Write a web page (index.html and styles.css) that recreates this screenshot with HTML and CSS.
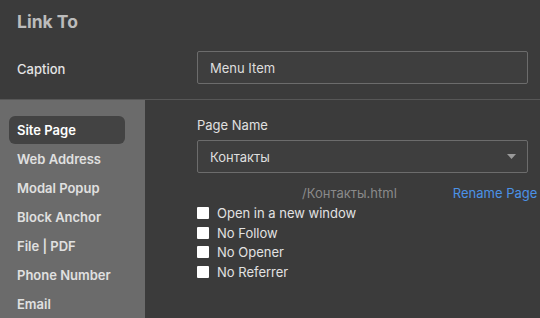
FILE: index.html
```html
<!DOCTYPE html>
<html>
<head>
<meta charset="utf-8">
<link rel="stylesheet" href="styles.css">
</head>
<body>
<div class="dialog">
  <div class="header">Link To</div>
  <div class="caption-row">
    <div class="caption-label">Caption</div>
    <div class="field">Menu Item</div>
  </div>
  <div class="main">
    <nav class="sidebar">
      <div class="nav-item active">Site Page</div>
      <div class="nav-item">Web Address</div>
      <div class="nav-item">Modal Popup</div>
      <div class="nav-item">Block Anchor</div>
      <div class="nav-item">File | PDF</div>
      <div class="nav-item">Phone Number</div>
      <div class="nav-item">Email</div>
    </nav>
    <section class="content">
      <div class="label">Page Name</div>
      <div class="field select">
        <span>Контакты</span>
        <svg class="arrow" width="9" height="5" viewBox="0 0 9 5"><path d="M0 0 H9 L4.5 5 Z" fill="#9a9a9a"/></svg>
      </div>
      <div class="path-row">
        <span class="path">/Контакты.html</span>
        <span class="rename">Rename Page</span>
      </div>
      <div class="checks">
        <div class="check"><span class="box"></span>Open in a new window</div>
        <div class="check"><span class="box"></span>No Follow</div>
        <div class="check"><span class="box"></span>No Opener</div>
        <div class="check"><span class="box"></span>No Referrer</div>
      </div>
    </section>
  </div>
</div>
</body>
</html>
```
FILE: styles.css
```css
html, body {
  margin: 0;
  padding: 0;
  background: #3b3b3b;
}
body {
  width: 540px;
  height: 318px;
  overflow: hidden;
  font-family: Inter, "Noto Sans", sans-serif;
  font-size: 13px;
  color: #e2e2e2;
}
.dialog {
  display: flex;
  flex-direction: column;
  height: 318px;
}
.header {
  height: 42px;
  display: flex;
  align-items: center;
  padding-left: 17px;
  font-size: 17.5px;
  font-weight: 700;
  color: #bcbcbc;
  padding-top: 1px;
  box-sizing: border-box;
}
.caption-row {
  display: flex;
  align-items: center;
  margin-top: 9px;
  padding-bottom: 15px;
  border-bottom: 1px solid #575757;
}
.caption-label {
  width: 180px;
  padding-left: 17px;
  font-weight: 500;
  color: #e4e4e4;
  padding-top: 3px;
}
.field {
  box-sizing: border-box;
  width: 331px;
  height: 33px;
  border: 1px solid #6c6c6c;
  border-radius: 2px;
  background: #3e3e3e;
  display: flex;
  align-items: center;
  padding-left: 12px;
  color: #dedede;
}
.main {
  flex: 1;
  display: flex;
}
.sidebar {
  width: 145px;
  background: #6b6b6b;
  padding-top: 16px;
  box-sizing: border-box;
  display: flex;
  flex-direction: column;
  gap: 1px;
}
.nav-item {
  margin-left: 9px;
  width: 116px;
  height: 28px;
  box-sizing: border-box;
  padding-left: 8px;
  padding-bottom: 1px;
  display: flex;
  align-items: center;
  font-weight: 600;
  color: #e0e0e0;
  border-radius: 6px;
}
.nav-item.active {
  background: #434343;
  color: #ffffff;
}
.content {
  padding-left: 52px;
  padding-top: 15px;
  display: flex;
  flex-direction: column;
}
.label {
  line-height: 20px;
  margin-bottom: 5px;
  color: #e0e0e0;
}
.select {
  justify-content: space-between;
  padding-right: 11px;
}
.path-row {
  display: flex;
  line-height: 20px;
  margin-top: 10px;
  padding-left: 105px;
}
.path {
  color: #8a8a8a;
}
.rename {
  margin-left: 56px;
  color: #4b92e6;
}
.checks {
  display: flex;
  flex-direction: column;
}
.check {
  display: flex;
  align-items: center;
  height: 19.7px;
  color: #e2e2e2;
}
.box {
  width: 12px;
  height: 12px;
  background: #ffffff;
  border-radius: 1px;
  margin-right: 8px;
}
```
